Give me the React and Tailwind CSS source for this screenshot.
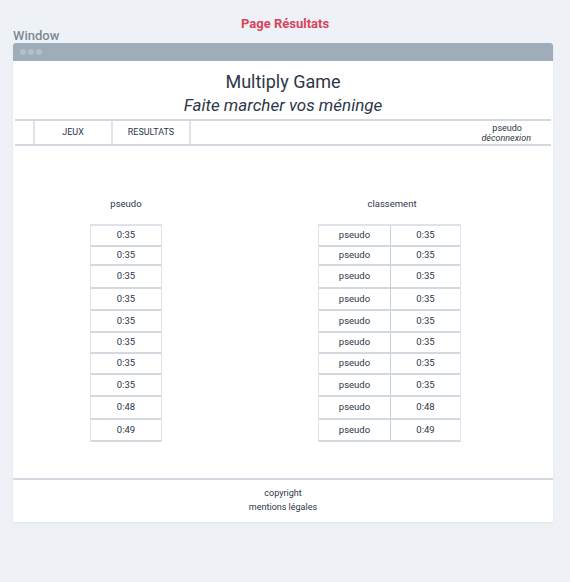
import React from 'react';

const times = ['0:35', '0:35', '0:35', '0:35', '0:35', '0:35', '0:35', '0:35', '0:48', '0:49'];
const rowHeights = ['h-[21px]', 'h-[19px]', 'h-[23px]', 'h-[22px]', 'h-[22px]', 'h-[21px]', 'h-[21px]', 'h-[22px]', 'h-[23px]', 'h-[22px]'];

const App = () => {
  return (
    <div className="w-[570px] h-[582px] bg-[#eef2f6] pt-[16px] text-[#2d3748]" style={{ fontFamily: 'Roboto, "Noto Sans", sans-serif' }}>
      <div className="text-center text-[13px] font-bold text-[#d8435e] leading-[16px]">Page Résultats</div>
      <div className="pl-[13px] text-[13px] font-medium text-[#7c8a98] leading-[11px] mt-[-2px]">Window</div>
      <div className="mx-[13px] mt-[2px] w-[540px] bg-white shadow-[0_1px_3px_rgba(0,0,0,0.06)]">
        {/* title bar */}
        <div className="h-[18px] bg-[#9fadba] rounded-t-[3px] flex items-center gap-[2px] pl-[7px]">
          <span className="w-[6px] h-[6px] rounded-full bg-[#b4c0ca]" />
          <span className="w-[6px] h-[6px] rounded-full bg-[#b4c0ca]" />
          <span className="w-[6px] h-[6px] rounded-full bg-[#b4c0ca]" />
        </div>

        {/* header */}
        <div className="text-center pt-[10px]">
          <div className="text-[18px] leading-[22px] text-[#2d3748]">Multiply Game</div>
          <div className="text-[17px] leading-[24px] italic text-[#2d3748]">Faite marcher vos méninge</div>
        </div>

        {/* nav */}
        <div className="mx-[2px] mt-[2px] h-[27px] border-y-2 border-[#d3d8e1] flex text-[9px] text-[#2d3748]">
          <div className="w-[20px] border-r-2 border-[#e0e5ec]" />
          <div className="w-[78px] border-r-2 border-[#e0e5ec] flex items-center justify-center">JEUX</div>
          <div className="w-[78px] border-r-2 border-[#e0e5ec] flex items-center justify-center">RESULTATS</div>
          <div className="flex-1 flex flex-col items-end justify-center pr-[20px] leading-[10px]">
            <span className="pr-[9px]">pseudo</span>
            <span className="italic">déconnexion</span>
          </div>
        </div>

        {/* main */}
        <div className="h-[332px] flex pl-[77px] pt-[52px] text-[9.5px] text-[#2d3748]">
          <div className="w-[72px] flex flex-col items-center">
            <div className="leading-[12px] mb-[14px]">pseudo</div>
            <div className="w-[72px] border-l border-r border-[#dde3ea] border-t-2 border-t-[#dde3ea]">
              {times.map((t, i) => (
                <div key={i} className={`${rowHeights[i]} flex items-center justify-center border-b-2 border-[#d3d9e1]`}>{t}</div>
              ))}
            </div>
          </div>
          <div className="w-[143px] ml-[156px] flex flex-col items-center">
            <div className="leading-[12px] mb-[14px] pl-[5px]">classement</div>
            <div className="w-[143px] border-l border-r border-[#dde3ea] border-t-2 border-t-[#dde3ea]">
              {times.map((t, i) => (
                <div key={i} className={`${rowHeights[i]} flex border-b-2 border-[#d3d9e1]`}>
                  <div className="w-[72px] flex items-center justify-center border-r border-[#c9d1db]">pseudo</div>
                  <div className="flex-1 flex items-center justify-center">{t}</div>
                </div>
              ))}
            </div>
          </div>
        </div>

        {/* footer */}
        <div className="border-t-2 border-[#d3d8e1] h-[44px] flex flex-col items-center pt-[6px] text-[9px] text-[#2d3748] leading-[14px]">
          <div>copyright</div>
          <div>mentions légales</div>
        </div>
      </div>
    </div>
  );
};

export default App;
